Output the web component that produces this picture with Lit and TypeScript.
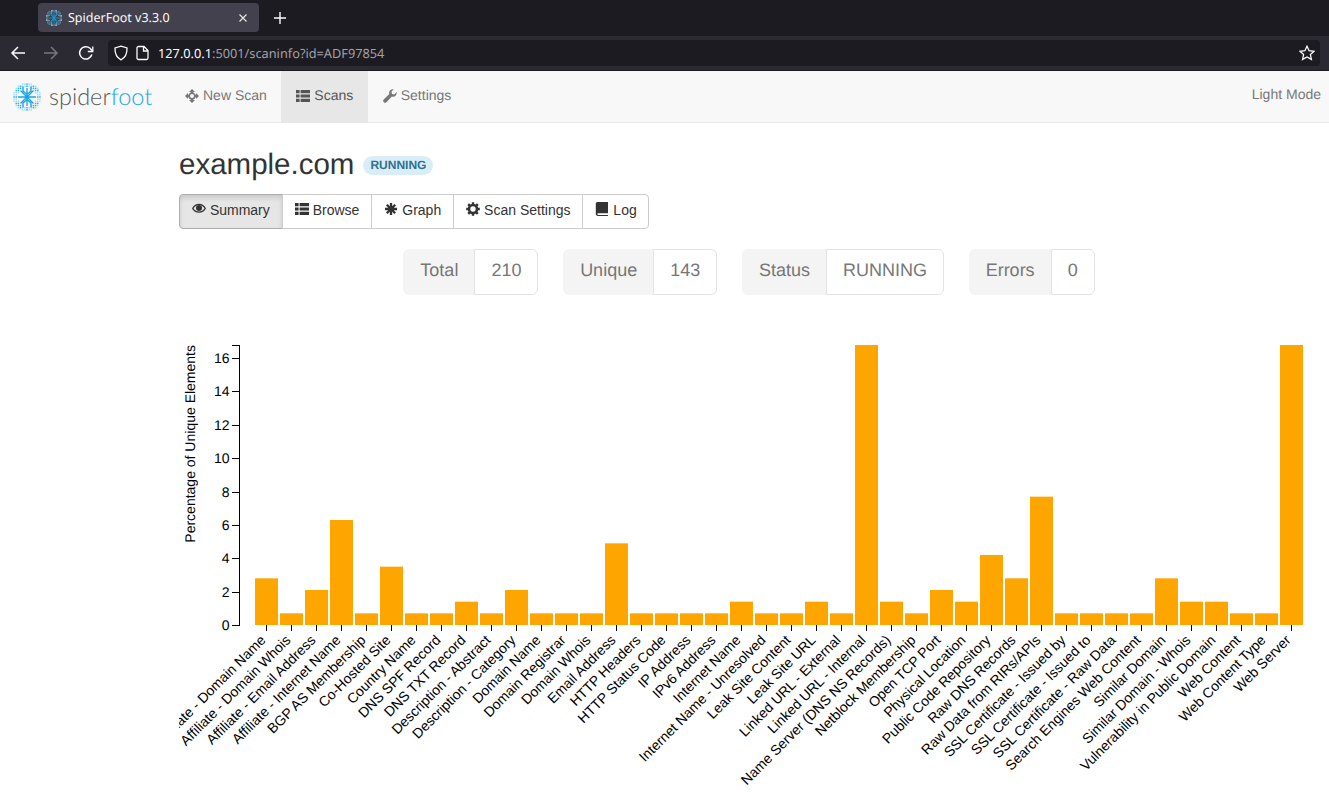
import { LitElement, css, html, svg } from 'lit';
import { customElement } from 'lit/decorators.js';

const CATEGORIES: [string, number][] = [
    ['Affiliate - Domain Name', 4], ['Affiliate - Domain Whois', 1], ['Affiliate - Email Address', 3],
    ['Affiliate - Internet Name', 9], ['BGP AS Membership', 1], ['Co-Hosted Site', 5], ['Country Name', 1],
    ['DNS SPF Record', 1], ['DNS TXT Record', 2], ['Description - Abstract', 1], ['Description - Category', 3],
    ['Domain Name', 1], ['Domain Registrar', 1], ['Domain Whois', 1], ['Email Address', 7], ['HTTP Headers', 1],
    ['HTTP Status Code', 1], ['IP Address', 1], ['IPv6 Address', 1], ['Internet Name', 2],
    ['Internet Name - Unresolved', 1], ['Leak Site Content', 1], ['Leak Site URL', 2], ['Linked URL - External', 1],
    ['Linked URL - Internal', 24], ['Name Server (DNS NS Records)', 2], ['Netblock Membership', 1],
    ['Open TCP Port', 3], ['Physical Location', 2], ['Public Code Repository', 6], ['Raw DNS Records', 4],
    ['Raw Data from RIRs/APIs', 11], ['SSL Certificate - Issued by', 1], ['SSL Certificate - Issued to', 1],
    ['SSL Certificate - Raw Data', 1], ['Search Engines Web Content', 1], ['Similar Domain', 4],
    ['Similar Domain - Whois', 2], ['Vulnerability in Public Domain', 2], ['Web Content', 1],
    ['Web Content Type', 1], ['Web Server', 24],
];

const TOTAL = 143;
// chart geometry, relative to the svg's own corner
const BASE_Y = 290;
const TOP_Y = 10;
const AXIS_X = 60.5;
const UNIT = (BASE_Y - TOP_Y) / ((24 / TOTAL) * 100);

const icon = (body: unknown, size = 14) => html`<svg class="glyph" width=${size} height=${size} viewBox="0 0 14 14" fill="currentColor">${body}</svg>`;

const thList = svg`<path d="M0 1h3.6v3.2H0zM4.6 1H14v3.2H4.6zM0 5.4h3.6v3.2H0zM4.6 5.4H14v3.2H4.6zM0 9.8h3.6V13H0zM4.6 9.8H14V13H4.6z"/>`;
const moveIcon = svg`<path d="M7 0l3 3H8.300v1.500H5.700V3H4zM7 14l3-3H8.300V9.500H5.700V11H4zM0 7l3-3v1.700h1.500v2.600H3V10zM14 7l-3-3v1.700H9.500v2.600H11V10z"/><circle cx="7" cy="7" r="2.800" fill="none" stroke="currentColor" stroke-width="1.500"/>`;
const wrench = svg`<path d="M13.6 3.1c.3 1.400-.1 2.700-1 3.600-1 1-2.400 1.300-3.700.9L3.400 13.200c-.7.700-1.800.7-2.500 0l-.2-.2c-.7-.7-.7-1.800 0-2.500L6.300 5c-.4-1.300-.1-2.700.9-3.700C8.100.4 9.400 0 10.800.3L8.500 2.600l.5 2.400 2.400.5z"/>`;
const eye = svg`<path fill-rule="evenodd" d="M7 1.800C3.900 1.800 1.300 3.700 0 6.500c1.300 2.800 3.900 4.200 7 4.200s5.700-1.400 7-4.200C12.700 3.700 10.100 1.800 7 1.800zM7 3c2.200 0 4.300 1.300 5.500 3.500-1.200 2-3.300 3-5.500 3s-4.300-1-5.500-3C2.700 4.300 4.800 3 7 3z"/><circle cx="7" cy="6" r="3"/>`;
const asterisk = svg`<g stroke="currentColor" stroke-width="2.300"><path d="M7 1v12M1 7h12M2.800 2.800l8.400 8.400M11.200 2.800l-8.400 8.400"/></g>`;
const cog = svg`<g stroke="currentColor" stroke-width="2.400"><path d="M7 .2v13.600M.2 7h13.600M2.200 2.200l9.600 9.600M11.800 2.200l-9.600 9.600"/></g><circle cx="7" cy="7" r="4" fill="#fff" stroke="currentColor" stroke-width="2.600"/>`;
const book = svg`<path d="M2.500 0H13v11.300H3.200c-.6 0-1 .3-1 .8s.4.800 1 .800H13V14H3c-1.300 0-2.200-.9-2.200-2.200V1.800C.8.800 1.500 0 2.500 0z"/>`;

// dot matrix behind the spider logo, pale dots with the brighter legs on top
function logoDots() {
    const dots = [];
    for (let row = -6; row <= 6; row++) {
        for (let col = -6; col <= 6; col++) {
            const r = Math.hypot(row, col);
            if (r > 6.7 || r < 4.4) continue;
            const bright = row === 0 || col === 0 || Math.abs(row) === Math.abs(col) || Math.abs(row) === 3 || Math.abs(col) === 3;
            dots.push(svg`<rect x=${14 + col * 2.15 - 0.75} y=${14 + row * 2.15 - 0.75} width="1.500" height="1.500" fill=${bright ? '#2fb0e8' : '#a5dcf4'}/>`);
        }
    }
    return dots;
}

const logoLegs = svg`<g stroke="#16a3e2" stroke-width="1.300" fill="none"><path d="M14 5v18M5 14h18M7.500 7.500l13 13M20.500 7.500l-13 13M10 3.500v4.500l4 3.500 4-3.500V3.500M10 24.500V20l4-3.500 4 3.500v4.500"/></g>`;

@customElement('browser-frame')
export class BrowserFrame extends LitElement {
    render() {
        return html`
        <div class="tabs">
            <div class="tab">
                <svg class="favicon" width="16" height="16" viewBox="0 0 28 28">${logoDots()}${logoLegs}</svg>
                <span class="tab-title">SpiderFoot v3.3.0</span>
                <svg class="tab-close" width="10" height="10" viewBox="0 0 10 10"><path d="M1.500 1.500l7 7M8.500 1.500l-7 7" stroke="#e6e6e8" stroke-width="1.200"/></svg>
            </div>
            <svg class="new-tab" width="12" height="12" viewBox="0 0 12 12"><path d="M6 0v12M0 6h12" stroke="#fbfbfe" stroke-width="1.400"/></svg>
        </div>
        <div class="toolbar">
            <svg class="nav-btn" width="16" height="16" viewBox="0 0 16 16" fill="none" stroke="#fbfbfe" stroke-width="1.500"><path d="M15 8H2M8 2L2 8l6 6"/></svg>
            <svg class="nav-btn" width="16" height="16" viewBox="0 0 16 16" fill="none" stroke="#77767d" stroke-width="1.500"><path d="M1 8h13M8 2l6 6-6 6"/></svg>
            <svg class="nav-btn" width="16" height="16" viewBox="0 0 16 16" fill="none" stroke="#fbfbfe" stroke-width="1.500"><path d="M13.800 9.500A6.200 6.200 0 1 1 12 3.300L14.500 6"/><path d="M14.800 1.500v5h-5" stroke-width="1.300"/></svg>
            <div class="urlbar">
                <svg width="16" height="16" viewBox="0 0 16 16" fill="none" stroke="#fbfbfe" stroke-width="1.300"><path d="M8 1.200L14 3c.2 5.500-1.500 9.500-6 11.800C3.500 12.500 1.800 8.500 2 3z"/></svg>
                <svg class="page" width="14" height="16" viewBox="0 0 14 16" fill="none" stroke="#fbfbfe" stroke-width="1.300"><path d="M2.500 1.500h5.500l4 4v7.500a1.500 1.500 0 0 1-1.500 1.500h-8A1.500 1.500 0 0 1 1 13V3a1.500 1.500 0 0 1 1.500-1.500zM7.500 1.500v4.500H12"/></svg>
                <span class="url"><b>127.0.0.1</b>:5001/scaninfo?id=ADF97854</span>
                <svg class="star" width="16" height="16" viewBox="0 0 16 16" fill="none" stroke="#fbfbfe" stroke-width="1.300"><path d="M8 1.200l2.100 4.500 4.900.6-3.600 3.300 1 4.800L8 12l-4.400 2.400 1-4.800L1 6.300l4.900-.6z"/></svg>
            </div>
        </div>
        `;
    }

    static override styles = css`
        :host {
            display: block;
            font-family: 'Noto Sans', sans-serif;
            background: #1c1b22;
            padding-bottom: 1px;
        }

        .tabs {
            display: flex;
            align-items: center;
            height: 36px;
            padding-left: 38px;
            box-sizing: border-box;
            padding-bottom: 1px;
        }

        .tab {
            display: flex;
            align-items: center;
            width: 221px;
            height: 29px;
            box-sizing: border-box;
            padding: 0 11px 0 8px;
            background: #42414d;
            border-radius: 4px;
            color: #fbfbfe;
            font-size: 12.500px;
        }

        .tab-title {
            margin-left: 6px;
            flex: 1;
        }

        .new-tab {
            margin-left: 15px;
        }

        .toolbar {
            display: flex;
            align-items: center;
            height: 34px;
            background: #2b2a33;
            padding: 0 9px 0 10px;
        }

        .nav-btn {
            margin-right: 17px;
            flex: none;
        }

        .nav-btn:nth-child(2) {
            margin-right: 19px;
        }

        .nav-btn:nth-child(3) {
            margin-right: 14px;
        }

        .urlbar {
            flex: 1;
            display: flex;
            align-items: center;
            height: 26px;
            background: #1c1b22;
            border-radius: 4px;
            padding: 0 5px 0 5px;
            color: #a0a0a6;
            font-size: 12.750px;
        }

        .page {
            margin-left: 7px;
        }

        .url {
            margin-left: 8px;
            flex: 1;
        }

        .url b {
            color: #fbfbfe;
            font-weight: 400;
        }
    `;
}

@customElement('app-root')
export class AppRoot extends LitElement {
    private renderStat(label: string, value: string) {
        return html`
        <div class="stat">
            <span class="stat-label">${label}</span>
            <span class="stat-value">${value}</span>
        </div>
        `;
    }

    private renderChart() {
        const yTicks = [0, 2, 4, 6, 8, 10, 12, 14, 16];
        return html`
        <svg class="chart" width="1150" height="457">
            <g>
                ${CATEGORIES.map(([, count], i) => {
                    const h = (count / TOTAL) * 100 * UNIT;
                    return svg`<rect x=${76 + i * 25} y=${BASE_Y - h} width="23" height=${h} fill="#ffa500"/>`;
                })}
            </g>
            <g class="axis">
                <path d="M53 ${TOP_Y + 0.5}H${AXIS_X}V${BASE_Y + 0.5}H53" fill="none"/>
                ${yTicks.map((t) => {
                    const y = Math.round(BASE_Y - t * UNIT) + 0.5;
                    return svg`<path d="M53 ${y}H${AXIS_X}"/><text x="50.500" y=${y} dy=".35em" text-anchor="end">${t}</text>`;
                })}
                ${CATEGORIES.map(([name], i) => {
                    const x = 87.5 + i * 25;
                    return svg`<path d="M${x} ${BASE_Y}V${BASE_Y + 6}"/><text transform="translate(${x - 3.5} ${BASE_Y + 12.5}) rotate(-45)" dy=".35em" text-anchor="end">${name}</text>`;
                })}
                <text transform="translate(16 10) rotate(-90)" text-anchor="end">Percentage of Unique Elements</text>
            </g>
        </svg>
        `;
    }

    render() {
        return html`
        <browser-frame></browser-frame>
        <nav class="navbar">
            <a class="brand">
                <svg width="28" height="28" viewBox="0 0 28 28">${logoDots()}${logoLegs}</svg>
                <span class="wordmark">spider<span class="foot">foot</span></span>
            </a>
            <a class="nav-item">${icon(moveIcon)} New Scan</a>
            <a class="nav-item active">${icon(thList)} Scans</a>
            <a class="nav-item">${icon(wrench)} Settings</a>
            <a class="mode">Light Mode</a>
        </nav>
        <main class="content">
            <div class="heading">
                <h2>example.com</h2>
                <span class="badge">RUNNING</span>
            </div>
            <div class="btn-group">
                <button class="btn active">${icon(eye)} Summary</button>
                <button class="btn">${icon(thList)} Browse</button>
                <button class="btn">${icon(asterisk)} Graph</button>
                <button class="btn">${icon(cog)} Scan Settings</button>
                <button class="btn">${icon(book)} Log</button>
            </div>
            <div class="stats">
                ${this.renderStat('Total', '210')}
                ${this.renderStat('Unique', '143')}
                ${this.renderStat('Status', 'RUNNING')}
                ${this.renderStat('Errors', '0')}
            </div>
            ${this.renderChart()}
        </main>
        `;
    }

    static override styles = css`
        :host {
            display: block;
            width: 1329px;
            height: 792px;
            overflow: hidden;
            background: #fff;
            font-family: 'Liberation Sans', Arial, sans-serif;
            font-size: 14px;
            color: #333;
            text-rendering: geometricPrecision;
        }

        .glyph {
            position: relative;
            top: 1px;
        }

        .navbar {
            display: flex;
            align-items: stretch;
            height: 52px;
            box-sizing: border-box;
            background: #f8f8f8;
            border-bottom: 1px solid #e7e7e7;
        }

        .brand {
            display: flex;
            align-items: center;
            width: 170px;
            padding-left: 13px;
            box-sizing: border-box;
        }

        .wordmark {
            margin-left: 8px;
            font-family: Lato, sans-serif;
            font-weight: 300;
            font-size: 23.500px;
            color: #58595b;
        }

        .foot {
            color: #1ba9e1;
        }

        .nav-item {
            display: flex;
            align-items: center;
            gap: 4px;
            padding: 0 14.500px 3px 15px;
            color: #777;
        }

        .nav-item.active {
            background: #e7e7e7;
            color: #555;
        }

        .mode {
            margin-left: auto;
            padding: 15px 8px 0 0;
            color: #777;
        }

        .content {
            padding-left: 179px;
        }

        .heading {
            display: flex;
            align-items: center;
            height: 33px;
            margin-top: 25px;
        }

        h2 {
            margin: 0;
            font-size: 29.500px;
            font-weight: 400;
            line-height: 33px;
        }

        .badge {
            margin: 2px 0 0 9px;
            padding: 3px 7px;
            border-radius: 10px;
            background: #d9edf7;
            color: #31708f;
            font-size: 12px;
            font-weight: 700;
            line-height: 13px;
        }

        .btn-group {
            display: flex;
            margin-top: 13px;
            height: 35px;
        }

        .btn {
            font: inherit;
            height: 35px;
            margin-left: -1px;
            padding: 0 12px 4px;
            background: #fff;
            border: 1px solid #ccc;
            color: #333;
        }

        .btn:first-child {
            margin-left: 0;
            border-radius: 4px 0 0 4px;
        }

        .btn:last-child {
            padding-right: 11px;
            border-radius: 0 4px 4px 0;
        }

        .btn.active {
            background: #e6e6e6;
            border-color: #adadad;
            box-shadow: inset 0 3px 5px rgba(0, 0, 0, 0.125);
        }

        .stats {
            display: flex;
            justify-content: center;
            gap: 24.700px;
            margin-top: 20px;
            padding-right: 10px;
        }

        .stat {
            display: flex;
            height: 46px;
            font-size: 18px;
            line-height: 41px;
            color: #777;
        }

        .stat-label {
            padding: 0 16px 0 17px;
            background: #f4f4f4;
            border-radius: 6px 0 0 6px;
            line-height: 42px;
        }

        .stat-value {
            padding: 0 16px;
            border: 1px solid #e3e3e3;
            border-radius: 0 6px 6px 0;
        }

        .chart {
            display: block;
            margin-top: 40px;
            overflow: hidden;
        }

        .axis path {
            stroke: #000;
            stroke-width: 1;
            shape-rendering: crispEdges;
        }

        .axis text {
            font-size: 14px;
            fill: #000;
        }
    `;
}
